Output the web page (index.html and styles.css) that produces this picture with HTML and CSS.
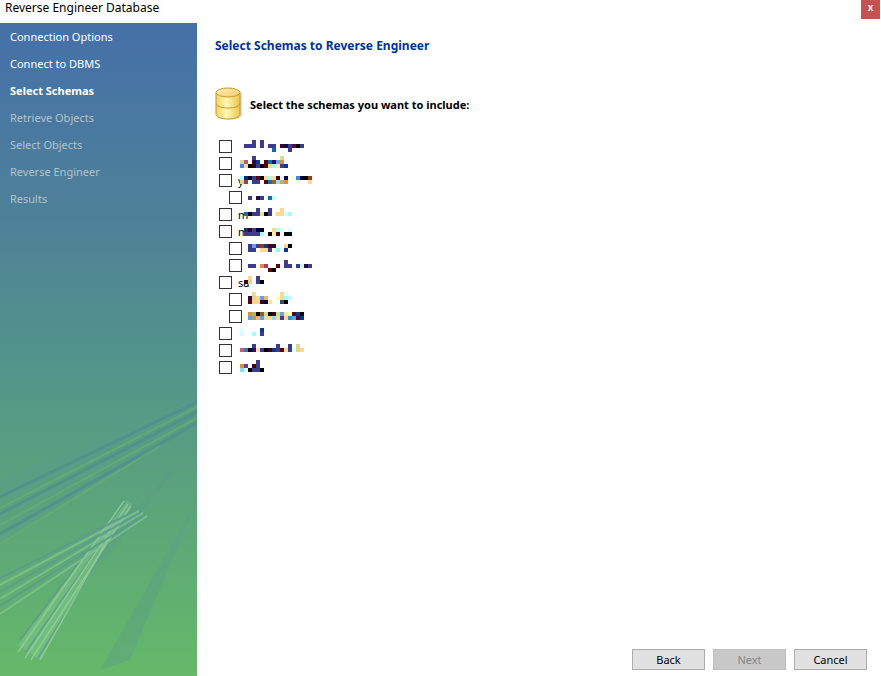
FILE: index.html
```html
<!DOCTYPE html>
<html lang="en">
<head>
<meta charset="utf-8">
<title>Reverse Engineer Database</title>
<link rel="stylesheet" href="styles.css">
</head>
<body>
<div class="window">
  <header class="titlebar">
    <span class="title">Reverse Engineer Database</span>
    <button class="close" type="button">x</button>
  </header>
  <div class="content">
    <aside class="sidebar">
      <svg class="art" viewBox="0 0 197 296" width="197" height="296" aria-hidden="true">
        <g fill="#5a9c8c" opacity=".35">
          <polygon points="0,100 197,18 197,28 158,68 0,165"/>
          <polygon points="190,70 142,132 105,180 90,180"/>
          <polygon points="197,120 130,280 100,290"/>
        </g>
        <g fill="none" stroke="#4f8f90" stroke-width="3" opacity=".75">
          <path d="M0 117 197 22"/>
          <path d="M0 134 197 32"/>
          <path d="M0 154 197 43"/>
        </g>
        <g fill="none" stroke="#68b070" stroke-width="2" opacity=".7">
          <path d="M0 128 197 27"/>
          <path d="M0 145 197 38"/>
          <path d="M0 164 160 66"/>
        </g>
        <polygon points="126,120 132,124 40,280 18,265" fill="#8acb92" opacity=".4"/>
        <g fill="none" stroke-width="1.5">
          <g stroke="#5b9a90" opacity=".8">
            <path d="M126 121 20 260"/>
            <path d="M129 123 26 272"/>
            <path d="M132 125 38 278"/>
          </g>
          <g stroke="#92d29a" opacity=".8">
            <path d="M124 121 18 272"/>
            <path d="M128 124 25 278"/>
            <path d="M131 126 31 280"/>
            <path d="M110 155 40 280"/>
          </g>
        </g>
        <g fill="none" stroke-width="2">
          <g stroke="#5c9c92" opacity=".9">
            <path d="M137 130 0 198"/>
            <path d="M141 132 0 212"/>
            <path d="M145 135 0 226"/>
          </g>
          <g stroke="#82c490" opacity=".75">
            <path d="M139 131 0 205"/>
            <path d="M143 133 0 219"/>
            <path d="M147 136 0 234"/>
          </g>
        </g>
      </svg>
      <nav class="steps">
        <div class="step done">Connection Options</div>
        <div class="step done">Connect to DBMS</div>
        <div class="step current">Select Schemas</div>
        <div class="step">Retrieve Objects</div>
        <div class="step">Select Objects</div>
        <div class="step">Reverse Engineer</div>
        <div class="step">Results</div>
      </nav>
    </aside>
    <main class="main">
      <h1 class="heading">Select Schemas to Reverse Engineer</h1>
      <div class="intro">
        <svg class="dbicon" viewBox="0 0 28 34" width="28" height="34" aria-hidden="true">
          <defs>
            <linearGradient id="dbbody" x1="0" y1="0" x2="1" y2="0">
              <stop offset="0" stop-color="#f3d35c"/>
              <stop offset=".45" stop-color="#fff6b8"/>
              <stop offset="1" stop-color="#eec544"/>
            </linearGradient>
            <linearGradient id="dbtop" x1="0" y1="0" x2="1" y2="1">
              <stop offset="0" stop-color="#fff0c0"/>
              <stop offset="1" stop-color="#f6c860"/>
            </linearGradient>
          </defs>
          <path d="M3 6v22c0 3 5 4.500 12 4.500s12-1.500 12-4.500V6z" fill="#b9b9b9" opacity=".5"/>
          <path d="M1 5.500v22C1 30 6 32 13 32s12-2 12-4.500v-22z" fill="url(#dbbody)" stroke="#c19a2e"/>
          <path d="M1 16.500c0 2.500 5 4.500 12 4.500s12-2 12-4.500" fill="none" stroke="#c19a2e"/>
          <ellipse cx="13" cy="5.500" rx="12" ry="4.500" fill="url(#dbtop)" stroke="#c19a2e"/>
        </svg>
        <span class="prompt">Select the schemas you want to include:</span>
      </div>
      <div class="schemas">
        <label class="schema"><span class="box"></span></label>
        <label class="schema"><span class="box"></span></label>
        <label class="schema"><span class="box"></span><span class="name">y</span></label>
        <label class="schema child"><span class="box"></span></label>
        <label class="schema"><span class="box"></span><span class="name">m</span></label>
        <label class="schema"><span class="box"></span><span class="name">m</span></label>
        <label class="schema child"><span class="box"></span></label>
        <label class="schema child"><span class="box"></span></label>
        <label class="schema"><span class="box"></span><span class="name">sa</span></label>
        <label class="schema child"><span class="box"></span></label>
        <label class="schema child"><span class="box"></span></label>
        <label class="schema"><span class="box"></span></label>
        <label class="schema"><span class="box"></span></label>
        <label class="schema"><span class="box"></span></label>
        <svg class="mosaic" viewBox="0 0 26 60" width="104" height="240" aria-hidden="true">
          <rect x="10" y="0" fill="#3b3b8f"/><rect x="12" y="0" fill="#3b3b8f"/>
          <rect x="8" y="1" fill="#3b3b8f"/><rect x="9" y="1" fill="#3b3b8f"/><rect x="10" y="1" fill="#3b3b8f"/><rect x="12" y="1" fill="#3b3b8f"/><rect x="14" y="1" fill="#3b3b8f"/><rect x="15" y="1" fill="#3b3b8f"/><rect x="17" y="1" fill="#3a0a20"/><rect x="18" y="1" fill="#0a0a50"/><rect x="19" y="1" fill="#3b3b8f"/><rect x="20" y="1" fill="#5a0a50"/><rect x="21" y="1" fill="#000"/><rect x="22" y="1" fill="#3b3b8f"/>
          <rect x="15" y="2" fill="#0a6ab0"/><rect x="19" y="2" fill="#3b3b8f"/>
          <rect x="10" y="4" fill="#3b3b8f"/><rect x="17" y="4" fill="#e0d890"/>
          <rect x="7" y="5" fill="#d8d890"/><rect x="8" y="5" fill="#b06070"/><rect x="10" y="5" fill="#300840"/><rect x="11" y="5" fill="#0a3a80"/><rect x="13" y="5" fill="#600010"/><rect x="14" y="5" fill="#0a70b0"/><rect x="15" y="5" fill="#300870"/><rect x="16" y="5" fill="#60a8f0"/><rect x="17" y="5" fill="#e09030"/>
          <rect x="7" y="6" fill="#3090e0"/><rect x="8" y="6" fill="#ffd890"/><rect x="9" y="6" fill="#000"/><rect x="10" y="6" fill="#300010"/><rect x="11" y="6" fill="#3b3b8f"/><rect x="12" y="6" fill="#000"/><rect x="13" y="6" fill="#600010"/><rect x="14" y="6" fill="#ffd890"/><rect x="15" y="6" fill="#a0ffff"/><rect x="16" y="6" fill="#ffe8b0"/><rect x="17" y="6" fill="#404080"/><rect x="18" y="6" fill="#0a3a90"/>
          <rect x="7" y="9" fill="#c0ffff"/><rect x="8" y="9" fill="#0a2a80"/><rect x="9" y="9" fill="#000"/><rect x="10" y="9" fill="#3b3b8f"/><rect x="11" y="9" fill="#600010"/><rect x="12" y="9" fill="#000"/><rect x="13" y="9" fill="#ffd890"/><rect x="14" y="9" fill="#a0ffff"/><rect x="15" y="9" fill="#ffe0a0"/><rect x="16" y="9" fill="#400010"/><rect x="17" y="9" fill="#e0ffff"/><rect x="18" y="9" fill="#000050"/><rect x="20" y="9" fill="#ffffd0"/><rect x="21" y="9" fill="#3090e0"/><rect x="22" y="9" fill="#000030"/><rect x="23" y="9" fill="#000"/><rect x="24" y="9" fill="#904010"/>
          <rect x="7" y="10" fill="#d8d890"/><rect x="8" y="10" fill="#a04040"/><rect x="10" y="10" fill="#3b3b8f"/><rect x="11" y="10" fill="#3b3b8f"/><rect x="13" y="10" fill="#600010"/><rect x="14" y="10" fill="#0a70b0"/><rect x="15" y="10" fill="#b06010"/><rect x="16" y="10" fill="#90e0ff"/><rect x="17" y="10" fill="#c0b070"/><rect x="18" y="10" fill="#e09030"/><rect x="21" y="10" fill="#ffffc0"/><rect x="24" y="10" fill="#ffd890"/>
          <rect x="9" y="14" fill="#3b3b8f"/><rect x="11" y="14" fill="#300840"/><rect x="12" y="14" fill="#3b3b8f"/><rect x="14" y="14" fill="#0a70b0"/><rect x="15" y="14" fill="#c0ffff"/>
          <rect x="11" y="17" fill="#3b3b8f"/><rect x="14" y="17" fill="#3b3b8f"/><rect x="17" y="17" fill="#ffd890"/>
          <rect x="8" y="18" fill="#0a70b0"/><rect x="9" y="18" fill="#000"/><rect x="10" y="18" fill="#3b3b8f"/><rect x="11" y="18" fill="#3b3b8f"/><rect x="12" y="18" fill="#ffd890"/><rect x="13" y="18" fill="#000"/><rect x="14" y="18" fill="#3b3b8f"/><rect x="16" y="18" fill="#ffd890"/><rect x="17" y="18" fill="#ffd890"/><rect x="18" y="18" fill="#d0ffff"/><rect x="19" y="18" fill="#a0ffff"/>
          <rect x="8" y="22" fill="#0a3a80"/><rect x="9" y="22" fill="#400010"/><rect x="10" y="22" fill="#3b3b8f"/><rect x="11" y="22" fill="#000050"/><rect x="12" y="22" fill="#000030"/><rect x="15" y="22" fill="#ffd890"/><rect x="16" y="22" fill="#c0ffd0"/><rect x="17" y="22" fill="#d0ffff"/><rect x="19" y="22" fill="#d0ffff"/>
          <rect x="8" y="23" fill="#3b3b8f"/><rect x="9" y="23" fill="#3b3b8f"/><rect x="10" y="23" fill="#3b3b8f"/><rect x="11" y="23" fill="#3b3b8f"/><rect x="12" y="23" fill="#a0ffff"/><rect x="14" y="23" fill="#000"/><rect x="15" y="23" fill="#ffe8b0"/><rect x="16" y="23" fill="#400010"/><rect x="18" y="23" fill="#000"/><rect x="19" y="23" fill="#000"/>
          <rect x="9" y="26" fill="#3b3b8f"/><rect x="10" y="26" fill="#60a0f0"/><rect x="11" y="26" fill="#3b3b8f"/><rect x="12" y="26" fill="#904010"/><rect x="13" y="26" fill="#0a3a90"/><rect x="14" y="26" fill="#500010"/><rect x="15" y="26" fill="#300840"/><rect x="16" y="26" fill="#e0ffff"/><rect x="18" y="26" fill="#ffd890"/><rect x="19" y="26" fill="#000"/>
          <rect x="9" y="27" fill="#3b3b8f"/><rect x="10" y="27" fill="#3b3b8f"/><rect x="12" y="27" fill="#ffd890"/><rect x="13" y="27" fill="#ffd890"/><rect x="14" y="27" fill="#3b3b8f"/><rect x="15" y="27" fill="#ffffc0"/><rect x="16" y="27" fill="#80ffff"/><rect x="18" y="27" fill="#0a3a90"/>
          <rect x="18" y="30" fill="#3b3b8f"/>
          <rect x="9" y="31" fill="#3b3b8f"/><rect x="10" y="31" fill="#3b3b8f"/><rect x="12" y="31" fill="#e09030"/><rect x="13" y="31" fill="#a04070"/><rect x="16" y="31" fill="#600010"/><rect x="18" y="31" fill="#3b3b8f"/><rect x="19" y="31" fill="#3b3b8f"/><rect x="21" y="31" fill="#3b3b8f"/><rect x="22" y="31" fill="#c0ffff"/><rect x="23" y="31" fill="#300840"/><rect x="24" y="31" fill="#3b3b8f"/>
          <rect x="14" y="32" fill="#600010"/><rect x="15" y="32" fill="#000"/>
          <rect x="9" y="34" fill="#ffd890"/><rect x="11" y="34" fill="#3b3b8f"/>
          <rect x="8" y="35" fill="#400010"/><rect x="9" y="35" fill="#e0d890"/><rect x="11" y="35" fill="#3b3b8f"/><rect x="12" y="35" fill="#000"/>
          <rect x="10" y="38" fill="#ffd890"/><rect x="17" y="38" fill="#ffd890"/><rect x="18" y="38" fill="#e0ffff"/>
          <rect x="9" y="39" fill="#300840"/><rect x="10" y="39" fill="#d8d890"/><rect x="11" y="39" fill="#ffd890"/><rect x="12" y="39" fill="#60a0f0"/><rect x="13" y="39" fill="#ffb060"/><rect x="16" y="39" fill="#ffffc0"/><rect x="17" y="39" fill="#ffd890"/><rect x="18" y="39" fill="#a0ffff"/><rect x="19" y="39" fill="#c0ffff"/>
          <rect x="9" y="40" fill="#600010"/><rect x="10" y="40" fill="#ffd890"/><rect x="11" y="40" fill="#ffd890"/><rect x="12" y="40" fill="#400010"/><rect x="13" y="40" fill="#000050"/><rect x="14" y="40" fill="#ffe0a0"/><rect x="17" y="40" fill="#305060"/><rect x="18" y="40" fill="#000"/>
          <rect x="9" y="43" fill="#e09040"/><rect x="10" y="43" fill="#b0b070"/><rect x="11" y="43" fill="#000"/><rect x="12" y="43" fill="#906010"/><rect x="13" y="43" fill="#d8d890"/><rect x="14" y="43" fill="#000"/><rect x="15" y="43" fill="#400010"/><rect x="16" y="43" fill="#d8d890"/><rect x="17" y="43" fill="#60a8e0"/><rect x="18" y="43" fill="#ffe8a0"/><rect x="19" y="43" fill="#ffffc0"/><rect x="20" y="43" fill="#600010"/><rect x="21" y="43" fill="#0a3a90"/><rect x="22" y="43" fill="#000"/>
          <rect x="9" y="44" fill="#60a0e0"/><rect x="10" y="44" fill="#a0a080"/><rect x="11" y="44" fill="#ffb060"/><rect x="12" y="44" fill="#60a0f0"/><rect x="13" y="44" fill="#ffd890"/><rect x="14" y="44" fill="#ffd890"/><rect x="15" y="44" fill="#90d8ff"/><rect x="16" y="44" fill="#ffd890"/><rect x="17" y="44" fill="#404090"/><rect x="18" y="44" fill="#ffd890"/><rect x="19" y="44" fill="#3090e0"/><rect x="20" y="44" fill="#60a0f0"/><rect x="21" y="44" fill="#500040"/><rect x="22" y="44" fill="#0a3a90"/>
          <rect x="7" y="47" fill="#e0ffff"/><rect x="12" y="47" fill="#0a3a90"/>
          <rect x="7" y="48" fill="#d0ffff"/><rect x="10" y="48" fill="#a0ffff"/><rect x="12" y="48" fill="#3b3b8f"/>
          <rect x="10" y="51" fill="#3b3b8f"/><rect x="16" y="51" fill="#3b3b8f"/><rect x="19" y="51" fill="#3b3b8f"/><rect x="21" y="51" fill="#d8d890"/>
          <rect x="7" y="52" fill="#c06070"/><rect x="8" y="52" fill="#4070c0"/><rect x="9" y="52" fill="#000"/><rect x="10" y="52" fill="#300870"/><rect x="11" y="52" fill="#ffe0a0"/><rect x="12" y="52" fill="#3b3b8f"/><rect x="13" y="52" fill="#000"/><rect x="14" y="52" fill="#400020"/><rect x="15" y="52" fill="#0a3a90"/><rect x="16" y="52" fill="#3b3b8f"/><rect x="17" y="52" fill="#600010"/><rect x="18" y="52" fill="#ffd890"/><rect x="19" y="52" fill="#3b3b8f"/><rect x="20" y="52" fill="#e0ffff"/><rect x="21" y="52" fill="#d8d890"/><rect x="22" y="52" fill="#ffd890"/>
          <rect x="11" y="55" fill="#3b3b8f"/>
          <rect x="7" y="56" fill="#e09030"/><rect x="8" y="56" fill="#6a3a9a"/><rect x="10" y="56" fill="#400010"/><rect x="11" y="56" fill="#3b3b8f"/>
          <rect x="7" y="57" fill="#90d8ff"/><rect x="8" y="57" fill="#d0ffff"/><rect x="9" y="57" fill="#000"/><rect x="10" y="57" fill="#3b3b8f"/><rect x="11" y="57" fill="#3b3b8f"/><rect x="12" y="57" fill="#000"/>
        </svg>
      </div>
      <footer class="actions">
        <button class="btn" type="button">Back</button>
        <button class="btn disabled" type="button" disabled>Next</button>
        <button class="btn" type="button">Cancel</button>
      </footer>
    </main>
  </div>
</div>
</body>
</html>
```
FILE: styles.css
```css
* { box-sizing: border-box; }
html, body { margin: 0; height: 100%; }
body { background: #fff; overflow: hidden; font-family: "Liberation Sans", Arial, sans-serif; font-size: 11px; }
.window { width: 881px; height: 676px; display: flex; flex-direction: column; }
.titlebar { height: 23px; flex: none; display: flex; justify-content: space-between; align-items: flex-start; background: #fff; padding: 0 1px 0 5px; }
.title { font-family: "Noto Sans", sans-serif; font-size: 12px; line-height: 15px; color: #000; }
.close { width: 19px; height: 19px; border: 0; padding: 0 0 3px; background: #c75050; color: #fff; font: bold 10px/16px "Liberation Sans", sans-serif; }
.content { flex: 1; display: flex; min-height: 0; }
.sidebar { position: relative; width: 197px; flex: none; background: linear-gradient(#4570a9 0%, #4e8198 30%, #559689 55%, #5ca57a 75%, #67b869 100%); overflow: hidden; }
.art { position: absolute; left: 0; top: 357px; }
.steps { position: relative; display: flex; flex-direction: column; padding: 7px 0 0 10px; }
.step { height: 27px; line-height: 14px; font-family: "Noto Sans", sans-serif; font-size: 11px; color: #b5c2c6; }
.step.done { color: #fff; }
.step.current { color: #fff; font-weight: 700; }
.main { flex: 1; display: flex; flex-direction: column; min-width: 0; padding: 0 14px 6px 18px; }
.heading { margin: 15px 0 0; font-family: "Noto Sans", sans-serif; font-size: 12px; line-height: 16px; font-weight: 700; color: #003399; }
.intro { display: flex; align-items: center; margin: 33px 0 0; height: 34px; }
.dbicon { flex: none; margin-right: 7px; }
.prompt { font-family: "Noto Sans", sans-serif; font-size: 11px; font-weight: 700; color: #000; }
.schemas { position: relative; margin: 19px 0 0 -3px; display: flex; flex-direction: column; flex: 1; padding-left: 7px; }
.schema { display: flex; height: 17px; align-items: flex-start; }
.schema.child { padding-left: 10px; }
.box { width: 13px; height: 13px; border: 1px solid #333; background: #fff; flex: none; }
.name { margin-left: 6px; font-family: "Noto Sans", sans-serif; font-size: 11px; line-height: 14px; color: #000; }
.mosaic { position: absolute; left: 0; top: 0; shape-rendering: crispEdges; }
.mosaic rect { width: 1px; height: 1px; }
.actions { display: flex; justify-content: flex-end; gap: 8px; flex: none; }
.btn { width: 73px; height: 21px; padding: 0; background: #e1e1e1; border: 1px solid #adadad; font-family: "Noto Sans", sans-serif; font-size: 11px; line-height: 17px; color: #000; }
.btn.disabled { background: #c8c8c8; border-color: #bfbfbf; color: #858585; }
```
